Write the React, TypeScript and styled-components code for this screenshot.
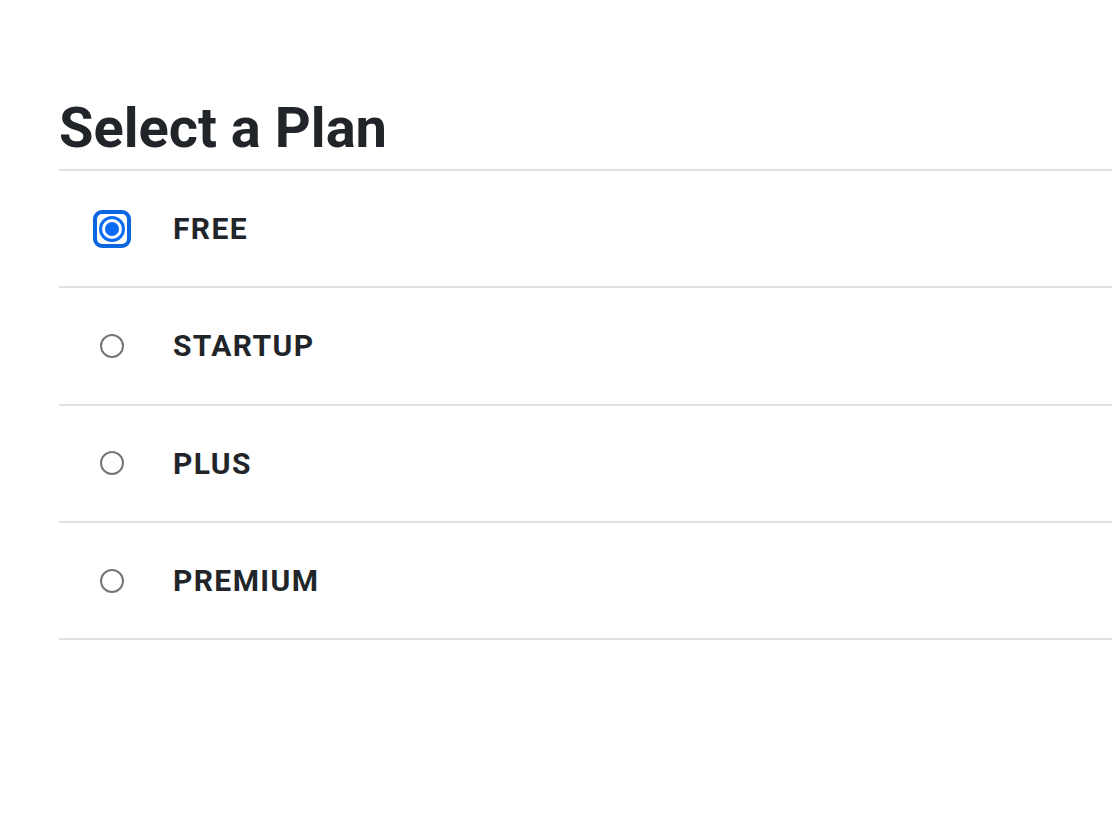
import styled, { createGlobalStyle } from 'styled-components';

const GlobalStyle = createGlobalStyle`
  html, body {
    margin: 0;
    padding: 0;
    background: #fff;
  }
  body {
    font-family: Roboto, "Liberation Sans", Arial, sans-serif;
    color: #212529;
  }
  *{
    box-sizing: border-box;
  }
`

const Page = styled.main`
  padding: 95px 0 0 59px;
`

const Title = styled.h1`
  margin: 0 0 7px 0;
  font-size: 56px;
  line-height: 67px;
  font-weight: 700;
  color: #212529;
`

const PlanList = styled.ul`
  list-style: none;
  margin: 0;
  padding: 0;
  border-top: 2px solid #dee2e6;
`

const PlanRow = styled.li`
  display: flex;
  align-items: center;
  height: 117.3px;
  border-bottom: 2px solid #dee2e6;
  padding-left: 34px;
  cursor: pointer;
`

const FocusRing = styled.span<{ $active: boolean }>`
  display: flex;
  align-items: center;
  justify-content: center;
  width: 38px;
  height: 38px;
  border: 4px solid ${p => (p.$active ? '#0b66e0' : 'transparent')};
  border-radius: 9px;
`

const Radio = styled.span<{ $checked: boolean }>`
  display: flex;
  align-items: center;
  justify-content: center;
  width: ${p => (p.$checked ? '26px' : '24px')};
  height: ${p => (p.$checked ? '26px' : '24px')};
  border-radius: 50%;
  border: ${p => (p.$checked ? '3px solid #0a6cf5' : '2px solid #767676')};
  background: #fff;
  &::after{
    content: '';
    display: ${p => (p.$checked ? 'block' : 'none')};
    width: 14px;
    height: 14px;
    border-radius: 50%;
    background: #0a6cf5;
  }
`

const PlanName = styled.span`
  margin-left: 42px;
  font-size: 30px;
  letter-spacing: 1.4px;
  font-weight: 700;
  color: #212529;
`

const plans = ['FREE', 'STARTUP', 'PLUS', 'PREMIUM'];

const App = () => {
  const selected = 'FREE';

  return (
    <>
      <GlobalStyle />
      <Page>
        <Title>Select a Plan</Title>
        <PlanList>
          {plans.map(plan => (
            <PlanRow key={plan}>
              <FocusRing $active={plan === selected}>
                <Radio $checked={plan === selected} />
              </FocusRing>
              <PlanName>{plan}</PlanName>
            </PlanRow>
          ))}
        </PlanList>
      </Page>
    </>
  );
};

export default App;
